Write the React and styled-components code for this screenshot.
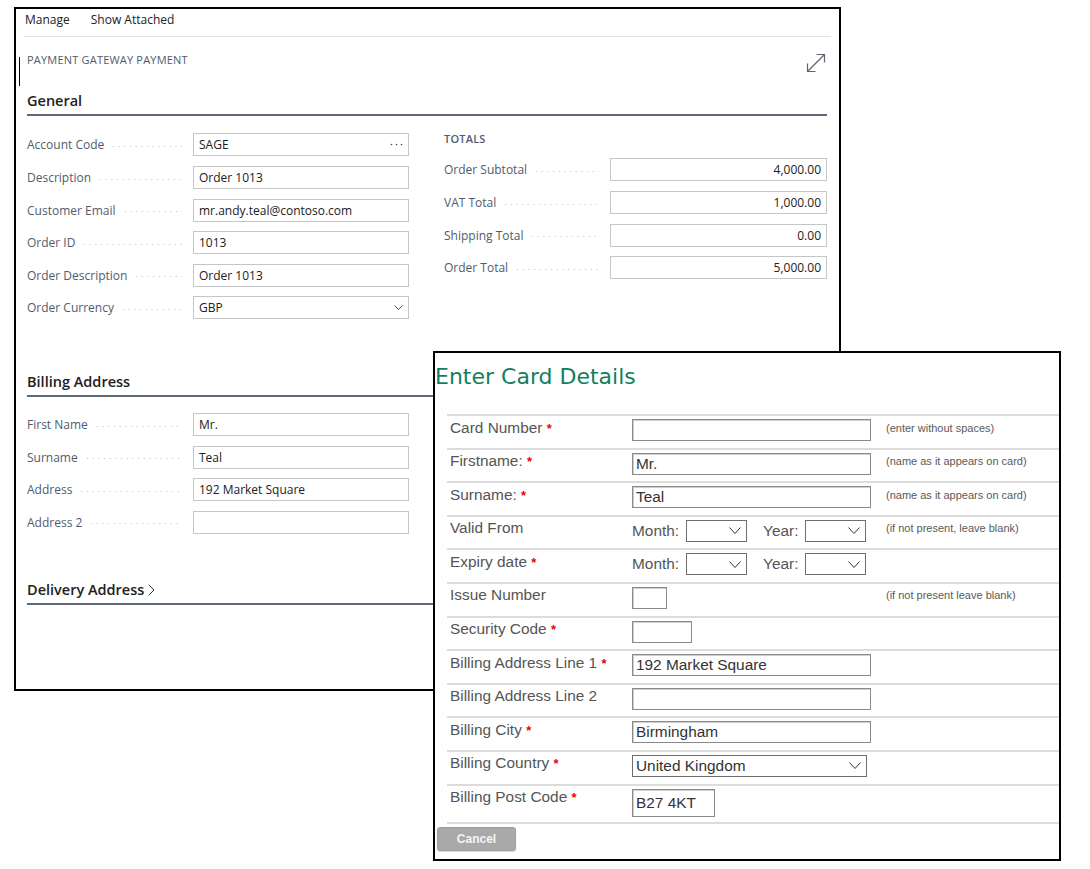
import React from 'react';
import styled, { createGlobalStyle } from 'styled-components';

const GlobalStyle = createGlobalStyle`
  html, body {
    margin: 0;
    padding: 0;
    background: #fff;
  }
  body {
    font-family: "Open Sans", "Segoe UI", sans-serif;
  }
`;

const Stage = styled.div`
  position: relative;
  width: 1090px;
  height: 869px;
  overflow: hidden;
  box-sizing: border-box;
  padding: 7px 0 0 14px;
  background: #fff;
`;

/* ---------- business central page ---------- */

const PageWindow = styled.div`
  width: 827px;
  height: 684px;
  box-sizing: border-box;
  border: 2px solid #000;
  padding: 0 8px;
  background: #fff;
`;

const MenuBar = styled.div`
  display: flex;
  align-items: center;
  gap: 21px;
  height: 28px;
  box-sizing: border-box;
  padding: 0 0 6px 1px;
  border-bottom: 1px solid #e4e4e4;
`;

const MenuItem = styled.span`
  font-size: 12px;
  line-height: 22px;
  color: #212121;
`;

const PageBody = styled.div`
  padding: 0 4px 0 3px;
`;

const TitleRow = styled.div`
  position: relative;
  display: flex;
  justify-content: space-between;
  align-items: flex-start;
  height: 54px;
  box-sizing: border-box;
  padding-top: 16px;

  &::before {
    content: '';
    position: absolute;
    left: -8px;
    top: 20px;
    width: 1px;
    height: 29px;
    background: #000;
  }
`;

const PageTitle = styled.div`
  font-size: 11px;
  line-height: 14px;
  letter-spacing: 0.2px;
  color: #505c6d;
  text-transform: uppercase;
`;

const IconButton = styled.span`
  display: flex;
  margin-right: 1px;
`;

const SectionHeading = styled.div`
  display: flex;
  align-items: center;
  gap: 4px;
  margin-top: ${(p) => p.$gap || 0}px;
  font-size: 14.5px;
  font-weight: 600;
  line-height: 20px;
  color: #212121;
  padding-bottom: 3px;
  border-bottom: 2px solid #5e6877;
`;

const TwoColumns = styled.div`
  display: grid;
  grid-template-columns: 382px 383px;
  column-gap: 35px;
  padding-top: 12.7px;
`;

const Column = styled.div`
  display: flex;
  flex-direction: column;
  width: ${(p) => (p.$w ? `${p.$w}px` : 'auto')};
  padding-top: ${(p) => p.$pad || 0}px;
`;

const GroupCaption = styled.div`
  display: flex;
  align-items: center;
  height: 25px;
  box-sizing: border-box;
  padding-bottom: 6px;
  font-size: 11px;
  font-weight: 600;
  color: #505c6d;
  letter-spacing: 0.2px;
`;

const FieldRow = styled.div`
  display: flex;
  align-items: center;
  height: 32.6px;
`;

const FieldLabel = styled.div`
  display: flex;
  align-items: center;
  width: 166px;
  flex: none;
  font-size: 12px;
  color: #505c6d;
  white-space: nowrap;
`;

const Leader = styled.span`
  flex: 1;
  height: 1px;
  margin: 3px 11px 0 9px;
  background-image: linear-gradient(to right, #bdbdbd 1px, transparent 1px);
  background-size: 5.7px 1px;
  background-repeat: repeat-x;
`;

const FieldBox = styled.div`
  flex: 1;
  display: flex;
  align-items: center;
  justify-content: ${(p) => (p.$right ? 'flex-end' : 'space-between')};
  height: 23px;
  box-sizing: border-box;
  padding: 0 5px;
  border: 1px solid #c6c6c6;
  font-size: 12px;
  color: #212121;
  background: #fff;
`;

const Ellipsis = () => (
  <svg width="13" height="3" viewBox="0 0 13 3">
    <circle cx="1.5" cy="1.5" r="0.8" fill="#444" />
    <circle cx="6.5" cy="1.5" r="0.8" fill="#444" />
    <circle cx="11.5" cy="1.5" r="0.8" fill="#444" />
  </svg>
);

const ChevronDown = ({ w = 10, h = 6, color = '#444' }) => (
  <svg width={w} height={h} viewBox={`0 0 ${w} ${h}`}>
    <path
      d={`M0.5 0.5 L${w / 2} ${h - 0.5} L${w - 0.5} 0.5`}
      stroke={color}
      strokeWidth="1"
      fill="none"
    />
  </svg>
);

const ChevronRight = () => (
  <svg width="7" height="12" viewBox="0 0 7 12">
    <path d="M0.8 0.8 L6 6 L0.8 11.2" stroke="#333" strokeWidth="1" fill="none" />
  </svg>
);

const ExpandIcon = () => (
  <svg width="20" height="20" viewBox="0 0 20 20" fill="none" stroke="#5f6670" strokeWidth="1.2">
    <path d="M1.5 18.5 L18.5 1.5" />
    <path d="M10.5 1.5 H18.5 V9.5" />
    <path d="M1.5 10.5 V18.5 H9.5" />
  </svg>
);

const Field = ({ label, value, kind, right }) => (
  <FieldRow>
    <FieldLabel>
      {label}
      <Leader />
    </FieldLabel>
    <FieldBox $right={right}>
      <span>{value}</span>
      {kind === 'lookup' && <Ellipsis />}
      {kind === 'select' && <ChevronDown w={9} h={5} color="#555" />}
    </FieldBox>
  </FieldRow>
);

const generalFields = [
  { label: 'Account Code', value: 'SAGE', kind: 'lookup' },
  { label: 'Description', value: 'Order 1013' },
  { label: 'Customer Email', value: 'mr.andy.teal@contoso.com' },
  { label: 'Order ID', value: '1013' },
  { label: 'Order Description', value: 'Order 1013' },
  { label: 'Order Currency', value: 'GBP', kind: 'select' },
];

const totalFields = [
  { label: 'Order Subtotal', value: '4,000.00' },
  { label: 'VAT Total', value: '1,000.00' },
  { label: 'Shipping Total', value: '0.00' },
  { label: 'Order Total', value: '5,000.00' },
];

const billingFields = [
  { label: 'First Name', value: 'Mr.' },
  { label: 'Surname', value: 'Teal' },
  { label: 'Address', value: '192 Market Square' },
  { label: 'Address 2', value: '' },
];

/* ---------- card details dialog ---------- */

const CardDialog = styled.div`
  position: absolute;
  left: 433px;
  top: 351px;
  width: 628px;
  height: 510px;
  box-sizing: border-box;
  border: 2px solid #000;
  background: #fff;
  font-family: "Liberation Sans", Arial, sans-serif;
`;

const DialogTitle = styled.h1`
  margin: 11px 0 0 0;
  font-family: "DejaVu Sans", Verdana, sans-serif;
  font-size: 22px;
  font-weight: normal;
  line-height: 26px;
  color: #0f7f60;
`;

const CardTable = styled.div`
  margin: 24px 0 0 12px;
  border-bottom: 2px solid #dcdcdc;
`;

const CardRow = styled.div`
  display: grid;
  grid-template-columns: 185px 254px 1fr;
  height: ${(p) => (p.$tall ? 38 : 33.6)}px;
  box-sizing: border-box;
  border-top: 2px solid #dcdcdc;
`;

const RowLabel = styled.div`
  padding: 2.5px 0 0 3px;
  font-size: 15.4px;
  line-height: 18px;
  color: #555;
  white-space: nowrap;
`;

const Req = styled.span`
  color: #e00;
  font-weight: bold;
  font-size: 13px;
`;

const InputCell = styled.div`
  display: flex;
  align-items: center;
  gap: 7px;
  padding-top: ${(p) => (p.$center ? 3 : 0)}px;
  align-self: ${(p) => (p.$center ? 'start' : 'stretch')};
  font-size: 15.4px;
  color: #444;
`;

const TextInput = styled.div`
  width: ${(p) => p.$w}px;
  height: ${(p) => (p.$tall ? 28 : 22)}px;
  margin-top: ${(p) => (p.$tall ? 3.5 : 3)}px;
  align-self: flex-start;
  box-sizing: border-box;
  display: flex;
  align-items: center;
  padding-left: 3px;
  border: 1px solid #8a8a8a;
  box-shadow: inset 1px 1px 0 #cfcfcf;
  font-size: 15.4px;
  color: #333;
  background: #fff;
`;

const SelectBox = styled.div`
  width: ${(p) => p.$w}px;
  height: 22px;
  box-sizing: border-box;
  display: flex;
  align-items: center;
  justify-content: space-between;
  padding: 0 5px 0 3px;
  border: 1px solid #6e6e6e;
  font-size: 15.4px;
  color: #333;
  background: #fff;
`;

const DateLabel = styled.span`
  margin-left: ${(p) => p.$gap || 0}px;
  color: #555;
`;

const Hint = styled.div`
  padding-top: 2.5px;
  font-size: 11px;
  line-height: 18px;
  color: #5a5a5a;
  white-space: nowrap;
`;

const CancelButton = styled.button`
  display: block;
  margin: 3px 0 0 2px;
  width: 79px;
  height: 24px;
  padding: 0;
  border: 1px solid #9d9d9d;
  border-radius: 3px;
  background: #a9a9a9;
  color: #f4f4f4;
  font-family: "Liberation Sans", Arial, sans-serif;
  font-size: 12px;
  font-weight: bold;
  box-shadow: 0 1px 1px rgba(0, 0, 0, 0.15);
`;

const cardRows = [
  { label: 'Card Number', req: true, input: { w: 239 }, hint: '(enter without spaces)' },
  { label: 'Firstname:', req: true, input: { w: 239, value: 'Mr.' }, hint: '(name as it appears on card)' },
  { label: 'Surname:', req: true, input: { w: 239, value: 'Teal' }, hint: '(name as it appears on card)' },
  { label: 'Valid From', date: true, hint: '(if not present, leave blank)' },
  { label: 'Expiry date', req: true, date: true },
  { label: 'Issue Number', input: { w: 35 }, hint: '(if not present leave blank)' },
  { label: 'Security Code', req: true, input: { w: 60 } },
  { label: 'Billing Address Line 1', req: true, input: { w: 239, value: '192 Market Square' } },
  { label: 'Billing Address Line 2', input: { w: 239 } },
  { label: 'Billing City', req: true, input: { w: 239, value: 'Birmingham' } },
  { label: 'Billing Country', req: true, select: { w: 235, value: 'United Kingdom' } },
  { label: 'Billing Post Code', req: true, input: { w: 83, value: 'B27 4KT' }, tall: true },
];

const RowControl = ({ row }) => {
  if (row.date) {
    return (
      <InputCell $center>
        <DateLabel>Month:</DateLabel>
        <SelectBox $w={61}>
          <span />
          <ChevronDown w={12} h={7} color="#333" />
        </SelectBox>
        <DateLabel $gap={9}>Year:</DateLabel>
        <SelectBox $w={61}>
          <span />
          <ChevronDown w={12} h={7} color="#333" />
        </SelectBox>
      </InputCell>
    );
  }
  if (row.select) {
    return (
      <InputCell $center>
        <SelectBox $w={row.select.w}>
          <span>{row.select.value}</span>
          <ChevronDown w={12} h={7} color="#333" />
        </SelectBox>
      </InputCell>
    );
  }
  return (
    <InputCell>
      <TextInput $w={row.input.w} $tall={row.tall}>
        {row.input.value}
      </TextInput>
    </InputCell>
  );
};

export default function App() {
  return (
    <>
      <GlobalStyle />
      <Stage>
        <PageWindow>
          <MenuBar>
            <MenuItem>Manage</MenuItem>
            <MenuItem>Show Attached</MenuItem>
          </MenuBar>
          <PageBody>
            <TitleRow>
              <PageTitle>Payment Gateway Payment</PageTitle>
              <IconButton>
                <ExpandIcon />
              </IconButton>
            </TitleRow>

            <SectionHeading>General</SectionHeading>
            <TwoColumns>
              <Column>
                {generalFields.map((f) => (
                  <Field key={f.label} {...f} />
                ))}
              </Column>
              <Column>
                <GroupCaption>TOTALS</GroupCaption>
                {totalFields.map((f) => (
                  <Field key={f.label} {...f} right />
                ))}
              </Column>
            </TwoColumns>

            <SectionHeading $gap={48}>Billing Address</SectionHeading>
            <Column $w={382} $pad={11}>
              {billingFields.map((f) => (
                <Field key={f.label} {...f} />
              ))}
            </Column>

            <SectionHeading $gap={41}>
              Delivery Address
              <ChevronRight />
            </SectionHeading>
          </PageBody>
        </PageWindow>

        <CardDialog>
          <DialogTitle>Enter Card Details</DialogTitle>
          <CardTable>
            {cardRows.map((row) => (
              <CardRow key={row.label} $tall={row.tall}>
                <RowLabel>
                  {row.label}
                  {row.req && <> <Req>*</Req></>}
                </RowLabel>
                <RowControl row={row} />
                <Hint>{row.hint}</Hint>
              </CardRow>
            ))}
          </CardTable>
          <CancelButton>Cancel</CancelButton>
        </CardDialog>
      </Stage>
    </>
  );
}
